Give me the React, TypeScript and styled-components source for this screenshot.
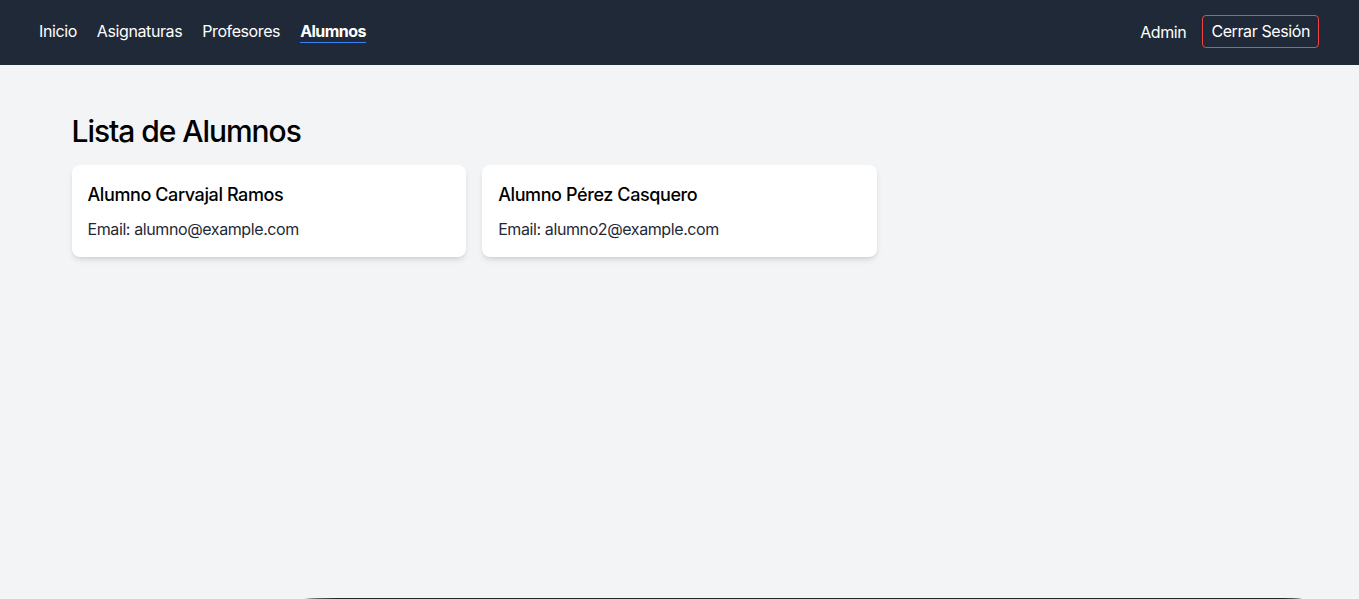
import React from "react";
import styled, { createGlobalStyle } from "styled-components";

const GlobalStyle = createGlobalStyle`
  html, body { margin: 0; padding: 0; }
  body {
    background: #f3f4f6;
    font-family: Inter, "Noto Sans", sans-serif;
    letter-spacing: -0.025em;
    color: #111827;
    overflow: hidden;
  }
  * { box-sizing: border-box; }
`;

const Page = styled.div`
  display: flex;
  flex-direction: column;
  min-height: 100vh;
`;

const NavBar = styled.nav`
  height: 65px;
  background: #1f2937;
  display: flex;
  align-items: center;
  justify-content: space-between;
  padding: 0 40px 2px 39px;
`;

const NavGroup = styled.div<{ $gap: number }>`
  display: flex;
  align-items: center;
  gap: ${(p) => p.$gap}px;
`;

const NavLink = styled.a<{ $active?: boolean }>`
  color: #ffffff;
  font-size: 16px;
  line-height: 20px;
  padding-bottom: 1px;
  text-decoration: none;
  font-weight: ${(p) => (p.$active ? 700 : 400)};
  letter-spacing: ${(p) => (p.$active ? "-0.035em" : "inherit")};
  border-bottom: 1px solid ${(p) => (p.$active ? "#3b82f6" : "transparent")};
  cursor: pointer;
`;

const UserName = styled.span`
  color: #ffffff;
  font-size: 16px;
  line-height: 24px;
`;

const LogoutButton = styled.button`
  font-family: inherit;
  letter-spacing: inherit;
  background: transparent;
  color: #ffffff;
  font-size: 16px;
  line-height: 24px;
  border: 1px solid #ef4444;
  border-radius: 4px;
  padding: 3px 8px 4px;
  cursor: pointer;
`;

const Main = styled.main`
  flex: 1;
  width: 100%;
  max-width: 1280px;
  margin: 0 auto;
  padding: 48px 32px 32px;
  min-height: 533px;
`;

const Title = styled.h1`
  margin: 0 0 16px;
  font-size: 30px;
  line-height: 36px;
  font-weight: 500;
  letter-spacing: -0.035em;
  color: #000;
`;

const Grid = styled.div`
  display: grid;
  grid-template-columns: repeat(3, 1fr);
  gap: 16px;
`;

const Card = styled.div`
  background: #fff;
  border-radius: 8px;
  padding: 16px;
  box-shadow: 0 4px 6px -1px rgba(0, 0, 0, 0.1), 0 2px 4px -2px rgba(0, 0, 0, 0.1);
`;

const CardName = styled.h2`
  margin: 0 0 8px;
  font-size: 18px;
  line-height: 28px;
  font-weight: 500;
  color: #000;
`;

const CardEmail = styled.p`
  margin: 0;
  font-size: 16px;
  line-height: 24px;
  color: #1f2937;
`;

const Footer = styled.footer`
  height: 40px;
  margin: 0 49px 0 290px;
  background: #262626;
  border-top-left-radius: 48px 3px;
  border-top-right-radius: 27px 3px;
`;

const alumnos = [
  { name: "Alumno Carvajal Ramos", email: "alumno@example.com" },
  { name: "Alumno Pérez Casquero", email: "alumno2@example.com" },
];

export default function App() {
  return (
    <>
      <GlobalStyle />
      <Page>
        <NavBar>
          <NavGroup $gap={20}>
            <NavLink>Inicio</NavLink>
            <NavLink>Asignaturas</NavLink>
            <NavLink>Profesores</NavLink>
            <NavLink $active>Alumnos</NavLink>
          </NavGroup>
          <NavGroup $gap={16}>
            <UserName>Admin</UserName>
            <LogoutButton>Cerrar Sesión</LogoutButton>
          </NavGroup>
        </NavBar>
        <Main>
          <Title>Lista de Alumnos</Title>
          <Grid>
            {alumnos.map((a) => (
              <Card key={a.email}>
                <CardName>{a.name}</CardName>
                <CardEmail>Email: {a.email}</CardEmail>
              </Card>
            ))}
          </Grid>
        </Main>
        <Footer />
      </Page>
    </>
  );
}
